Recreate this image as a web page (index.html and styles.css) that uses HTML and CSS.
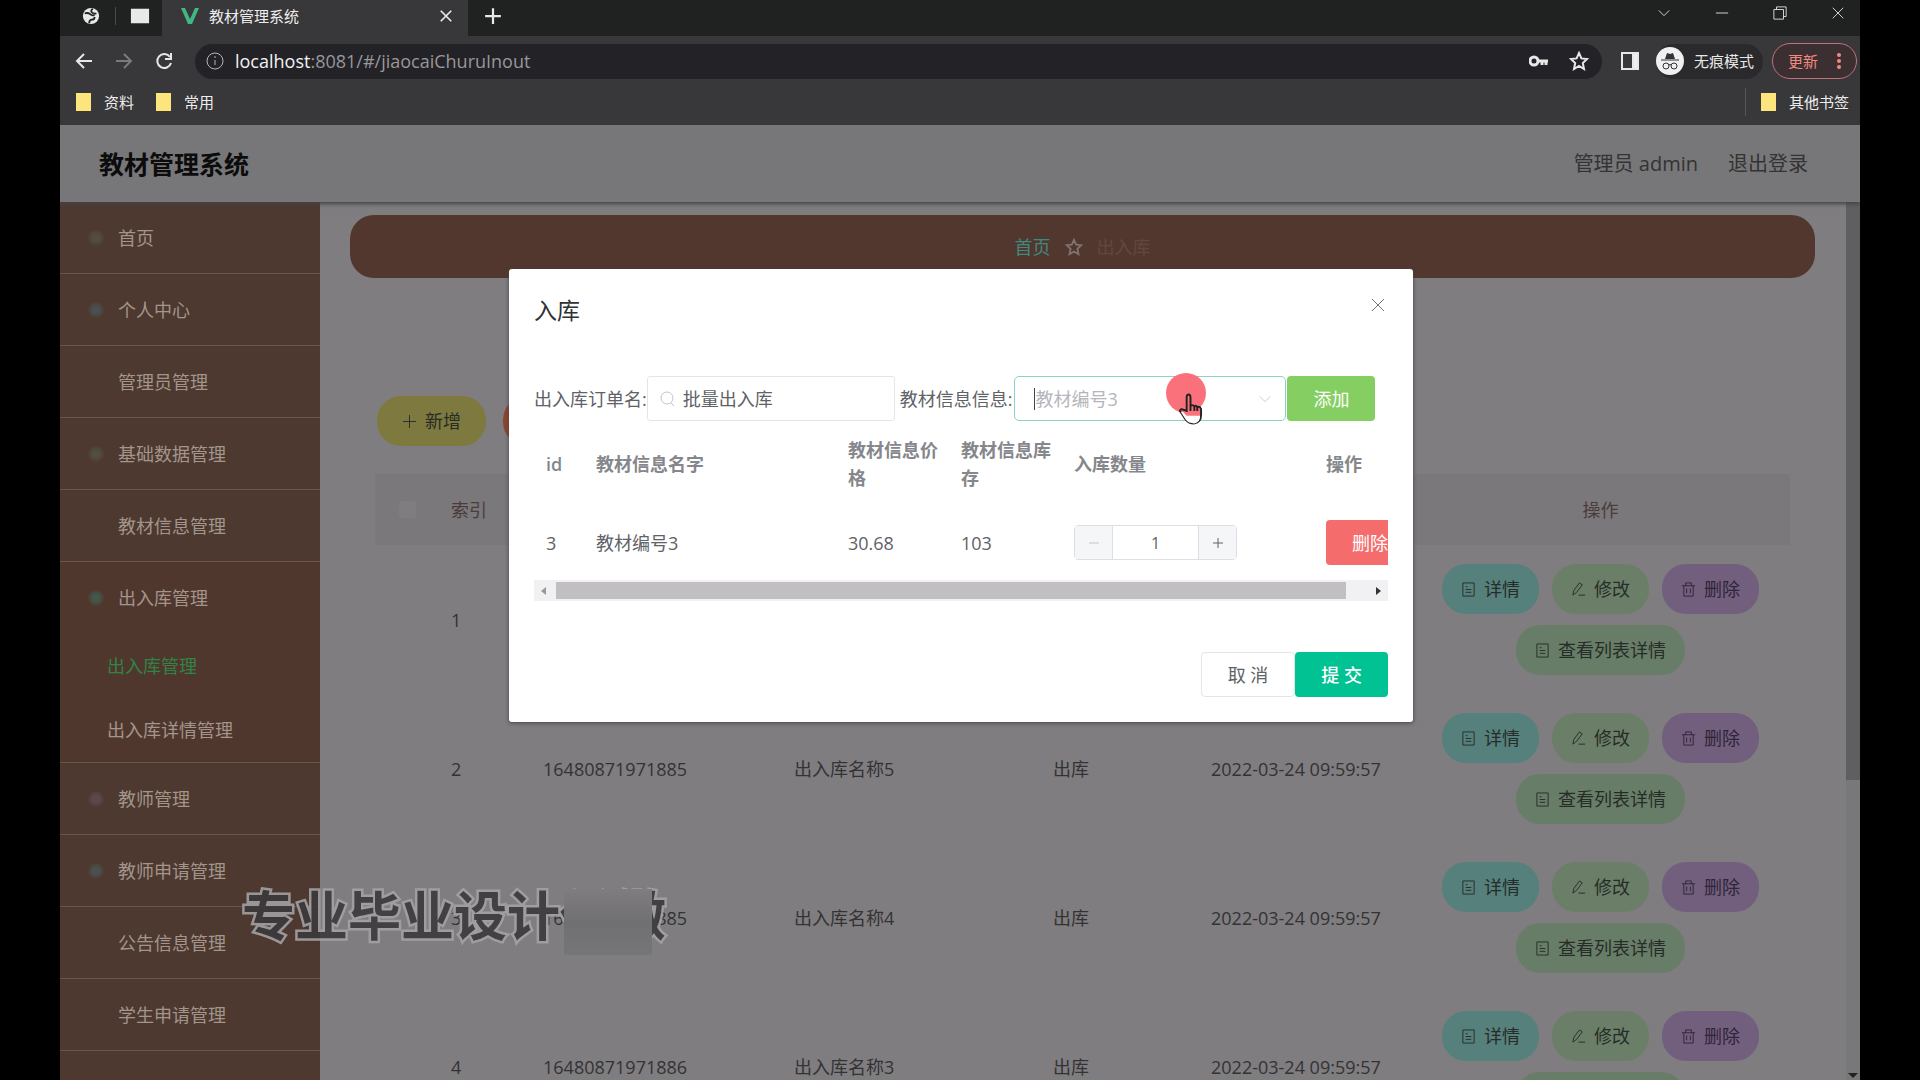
FILE: index.html
```html
<!DOCTYPE html>
<html lang="zh-CN">
  <head>
    <meta charset="UTF-8" />
    <title>教材管理系统</title>
    <link rel="stylesheet" href="styles.css">
  </head>
  <body>
    <svg class="sprite" aria-hidden="true">
      <symbol id="icon-doc" viewBox="0 0 16 16"><path d="M2 1h12v14H2zM5 5h2M5 8h6M5 11h6" /></symbol>
      <symbol id="icon-edit" viewBox="0 0 16 16"><path d="M2 14l1-5 6-8 3 2-6 8zM8 14h7" /></symbol>
      <symbol id="icon-trash" viewBox="0 0 16 16"><path d="M1 4h14M5 4V1h6v3M3 4v11h10V4M6 7v5M10 7v5" /></symbol>
      <symbol id="icon-star" viewBox="0 0 20 20"><path d="M10 2l2.400 5.400 5.600.600-4.200 4 1.200 6-5-3-5 3 1.200-6L2 8l5.600-.600z" /></symbol>
      <symbol id="icon-close" viewBox="0 0 16 16"><path d="M2 2l12 12M14 2L2 14" /></symbol>
      <symbol id="icon-down" viewBox="0 0 16 16"><path d="M2 5l6 6 6-6" /></symbol>
    </svg>

    <div class="window">
      <div class="tabs">
        <div class="tabs__pinned">
          <svg class="icon icon--globe" viewBox="0 0 20 20"><circle cx="10" cy="10" r="9" fill="#e8e8e8" /><path d="M3 7q4-1 6 1t5 1M12 2q-3 2-1 4t5 1M8 18q0-4 3-4t3-3" fill="none" stroke="#222423" stroke-width="2" /></svg>
        </div>
        <div class="tabs__pinned tabs__pinned--folder">
          <svg class="icon icon--page" viewBox="0 0 22 18"><path d="M1 1h20v16H1z" fill="#e8e8e8" /></svg>
        </div>
        <div class="tabs__active">
          <svg class="icon icon--vue" viewBox="0 0 20 18"><path d="M1 1h4l5 11 5-11h4l-7 16H8z" fill="#41b883" /></svg>
          <span class="tabs__title">教材管理系统</span>
          <button class="chrome-btn" aria-label="关闭标签页"><svg class="icon icon--small"><use href="#icon-close" /></svg></button>
        </div>
        <button class="chrome-btn tabs__new" aria-label="新标签页"><svg class="icon" viewBox="0 0 16 16"><path d="M8 1v14M1 8h14" /></svg></button>
        <div class="tabs__controls">
          <button class="chrome-btn" aria-label="搜索标签页"><svg class="icon icon--thin icon--small"><use href="#icon-down" /></svg></button>
          <button class="chrome-btn" aria-label="最小化"><svg class="icon icon--thin icon--small" viewBox="0 0 16 16"><path d="M1 8h14" /></svg></button>
          <button class="chrome-btn" aria-label="还原"><svg class="icon icon--thin icon--small" viewBox="0 0 16 16"><path d="M1 4h11v11H1zM4 4V1h11v11h-3" /></svg></button>
          <button class="chrome-btn" aria-label="关闭"><svg class="icon icon--thin icon--small"><use href="#icon-close" /></svg></button>
        </div>
      </div>

      <div class="toolbar">
        <div class="toolbar__nav">
          <button class="chrome-btn" aria-label="后退"><svg class="icon" viewBox="0 0 18 18"><path d="M17 9H2M9 2L2 9l7 7" /></svg></button>
          <button class="chrome-btn chrome-btn--off" aria-label="前进"><svg class="icon" viewBox="0 0 18 18"><path d="M1 9h15M9 2l7 7-7 7" /></svg></button>
          <button class="chrome-btn" aria-label="刷新"><svg class="icon" viewBox="0 0 18 18"><path d="M15 5a7 7 0 1 0 1 6M16 1v6h-6" /></svg></button>
        </div>
        <div class="address">
          <svg class="icon icon--info" viewBox="0 0 18 18"><circle cx="9" cy="9" r="8" /><path d="M9 8v5M9 4v2" /></svg>
          <a class="address__url" href="#/jiaocaiChuruInout"><b class="address__host">localhost</b>:8081/#/jiaocaiChuruInout</a>
          <svg class="icon icon--key" viewBox="0 0 20 12"><circle cx="5" cy="6" r="4" /><path d="M9 6h10M17 6v4M13 6v4" /></svg>
          <svg class="icon icon--star"><use href="#icon-star" /></svg>
        </div>
        <svg class="icon icon--panel" viewBox="0 0 18 18"><path d="M1 1h16v16H1z" /><path d="M12 1h5v16h-5z" fill="#eee" /></svg>
        <div class="incognito">
          <svg class="icon icon--incognito" viewBox="0 0 28 28"><circle cx="14" cy="14" r="14" fill="#f0f0f2" /><path d="M9 12l2-6 3 1 3-1 2 6z" fill="#333" /><path d="M5 13h18" stroke="#333" /><g fill="none" stroke="#333"><circle cx="10" cy="19" r="3" /><circle cx="18" cy="19" r="3" /><path d="M13 18q1-1 2 0" /></g></svg>
          <span>无痕模式</span>
        </div>
        <button class="update">更新
          <svg class="icon icon--dots" viewBox="0 0 4 18"><circle cx="2" cy="3" r="2" /><circle cx="2" cy="9" r="2" /><circle cx="2" cy="15" r="2" /></svg>
        </button>
      </div>

      <div class="bookmarks">
        <a class="bookmark" href="#"><i class="bookmark__folder"></i>资料</a>
        <a class="bookmark" href="#"><i class="bookmark__folder"></i>常用</a>
        <a class="bookmark bookmark--other" href="#"><i class="bookmark__folder"></i>其他书签</a>
      </div>

      <div class="app">
        <header class="header">
          <h1 class="header__title">教材管理系统</h1>
          <span class="header__user">管理员 admin</span>
          <a class="header__logout" href="#">退出登录</a>
        </header>

        <div class="layout">
          <nav class="menu">
            <a class="menu__item" href="#"><i class="menu__icon menu__icon--green"></i>首页</a>
            <a class="menu__item" href="#"><i class="menu__icon menu__icon--blue"></i>个人中心</a>
            <a class="menu__item" href="#"><i class="menu__icon"></i>管理员管理</a>
            <a class="menu__item" href="#"><i class="menu__icon menu__icon--green"></i>基础数据管理</a>
            <a class="menu__item" href="#"><i class="menu__icon"></i>教材信息管理</a>
            <div class="menu__group">
              <a class="menu__item menu__item--open" href="#"><i class="menu__icon menu__icon--teal"></i>出入库管理</a>
              <a class="menu__sub menu__sub--active" href="#">出入库管理</a>
              <a class="menu__sub" href="#">出入库详情管理</a>
            </div>
            <a class="menu__item" href="#"><i class="menu__icon menu__icon--violet"></i>教师管理</a>
            <a class="menu__item" href="#"><i class="menu__icon menu__icon--blue"></i>教师申请管理</a>
            <a class="menu__item" href="#"><i class="menu__icon"></i>公告信息管理</a>
            <a class="menu__item" href="#"><i class="menu__icon"></i>学生申请管理</a>
            <a class="menu__item" href="#"><i class="menu__icon"></i></a>
          </nav>

          <main class="main">
            <div class="breadcrumb">
              <a class="breadcrumb__home" href="#">首页</a>
              <svg class="icon icon--crumb"><use href="#icon-star" /></svg>
              <span>出入库</span>
            </div>

            <div class="panel">
              <div class="actions">
                <button class="pill pill--add"><svg class="icon icon--pill" viewBox="0 0 16 16"><path d="M8 1v14M1 8h14" /></svg>新增</button>
                <button class="pill pill--remove"><svg class="icon icon--pill"><use href="#icon-trash" /></svg>删除</button>
              </div>

              <table class="list">
                <colgroup>
                  <col class="list__check"><col class="list__index"><col class="list__order"><col class="list__name"><col class="list__type"><col class="list__date"><col class="list__ops">
                </colgroup>
                <thead>
                  <tr>
                    <th><input class="check" type="checkbox" aria-label="全选"></th>
                    <th>索引</th>
                    <th></th>
                    <th></th>
                    <th></th>
                    <th></th>
                    <th>操作</th>
                  </tr>
                </thead>
                <tbody>
                  <tr>
                    <td><input class="check" type="checkbox" aria-label="选择 1"></td>
                    <td>1</td>
                    <td></td>
                    <td></td>
                    <td></td>
                    <td></td>
                    <td>
                      <div class="ops">
                        <button class="pill pill--info"><svg class="icon icon--pill"><use href="#icon-doc" /></svg>详情</button>
                        <button class="pill pill--edit"><svg class="icon icon--pill"><use href="#icon-edit" /></svg>修改</button>
                        <button class="pill pill--delete"><svg class="icon icon--pill"><use href="#icon-trash" /></svg>删除</button>
                        <button class="pill pill--detail"><svg class="icon icon--pill"><use href="#icon-doc" /></svg>查看列表详情</button>
                      </div>
                    </td>
                  </tr>
                  <tr>
                    <td><input class="check" type="checkbox" aria-label="选择 2"></td>
                    <td>2</td>
                    <td>16480871971885</td>
                    <td>出入库名称5</td>
                    <td>出库</td>
                    <td>2022-03-24 09:59:57</td>
                    <td>
                      <div class="ops">
                        <button class="pill pill--info"><svg class="icon icon--pill"><use href="#icon-doc" /></svg>详情</button>
                        <button class="pill pill--edit"><svg class="icon icon--pill"><use href="#icon-edit" /></svg>修改</button>
                        <button class="pill pill--delete"><svg class="icon icon--pill"><use href="#icon-trash" /></svg>删除</button>
                        <button class="pill pill--detail"><svg class="icon icon--pill"><use href="#icon-doc" /></svg>查看列表详情</button>
                      </div>
                    </td>
                  </tr>
                  <tr>
                    <td><input class="check" type="checkbox" aria-label="选择 3"></td>
                    <td>3</td>
                    <td>16480871971885</td>
                    <td>出入库名称4</td>
                    <td>出库</td>
                    <td>2022-03-24 09:59:57</td>
                    <td>
                      <div class="ops">
                        <button class="pill pill--info"><svg class="icon icon--pill"><use href="#icon-doc" /></svg>详情</button>
                        <button class="pill pill--edit"><svg class="icon icon--pill"><use href="#icon-edit" /></svg>修改</button>
                        <button class="pill pill--delete"><svg class="icon icon--pill"><use href="#icon-trash" /></svg>删除</button>
                        <button class="pill pill--detail"><svg class="icon icon--pill"><use href="#icon-doc" /></svg>查看列表详情</button>
                      </div>
                    </td>
                  </tr>
                  <tr>
                    <td><input class="check" type="checkbox" aria-label="选择 4"></td>
                    <td>4</td>
                    <td>16480871971886</td>
                    <td>出入库名称3</td>
                    <td>出库</td>
                    <td>2022-03-24 09:59:57</td>
                    <td>
                      <div class="ops">
                        <button class="pill pill--info"><svg class="icon icon--pill"><use href="#icon-doc" /></svg>详情</button>
                        <button class="pill pill--edit"><svg class="icon icon--pill"><use href="#icon-edit" /></svg>修改</button>
                        <button class="pill pill--delete"><svg class="icon icon--pill"><use href="#icon-trash" /></svg>删除</button>
                        <button class="pill pill--detail"><svg class="icon icon--pill"><use href="#icon-doc" /></svg>查看列表详情</button>
                      </div>
                    </td>
                  </tr>
                </tbody>
              </table>
            </div>
          </main>

          <div class="scroll">
            <div class="scroll__thumb"></div>
            <div class="scroll__arrow"></div>
          </div>
        </div>
      </div>
    </div>

    <div class="overlay">
      <div class="dialog" role="dialog" aria-labelledby="dialog-title">
        <div class="dialog__header">
          <h2 class="dialog__title" id="dialog-title">入库</h2>
          <button class="dialog__close" aria-label="关闭"><svg class="icon icon--thin"><use href="#icon-close" /></svg></button>
        </div>

        <div class="form">
          <label for="order">出入库订单名:</label>
          <div class="field">
            <svg class="icon icon--search" viewBox="0 0 16 16"><circle cx="8" cy="7" r="6" /><path d="M12 12l3 3" /></svg>
            <input class="field__input" id="order" type="text" value="批量出入库">
          </div>
          <label class="form__label" for="book">教材信息信息:</label>
          <div class="picker">
            <select class="picker__select" id="book">
              <option>教材编号3</option>
            </select>
            <i class="picker__caret"></i>
            <svg class="icon icon--arrow"><use href="#icon-down" /></svg>
            <div class="pointer">
              <svg class="pointer__hand" viewBox="0 0 26 32"><path d="M9 18V4q0-3 2-3t2 3v9q1-2 4 0 2-1 3 1 3-1 4 2v6q0 8-7 9-6 0-9-4l-6-9q1-3 4-1z" /><path class="pointer__palm" d="M3 19q2-1 4 2l2 2h14q0 7-6 8-6 0-9-4z" /><path d="M13 12v6M17 13v5M20 14v4" /></svg>
            </div>
          </div>
          <button class="btn btn--success">添加</button>
        </div>

        <div class="books">
          <table class="books__table">
            <colgroup>
              <col class="books__id"><col class="books__name"><col class="books__price"><col class="books__stock"><col class="books__count"><col class="books__ops">
            </colgroup>
            <thead>
              <tr>
                <th>id</th>
                <th>教材信息名字</th>
                <th>教材信息价格</th>
                <th>教材信息库存</th>
                <th>入库数量</th>
                <th>操作</th>
              </tr>
            </thead>
            <tbody>
              <tr>
                <td>3</td>
                <td>教材编号3</td>
                <td>30.68</td>
                <td>103</td>
                <td>
                  <div class="stepper">
                    <button class="stepper__btn stepper__btn--off" aria-label="减少"><svg class="icon icon--step" viewBox="0 0 12 12"><path d="M1 6h10" /></svg></button>
                    <input class="stepper__input" type="text" value="1" aria-label="入库数量">
                    <button class="stepper__btn" aria-label="增加"><svg class="icon icon--step" viewBox="0 0 12 12"><path d="M1 6h10M6 1v10" /></svg></button>
                  </div>
                </td>
                <td><button class="btn btn--danger">删除</button></td>
              </tr>
            </tbody>
          </table>
        </div>
        <div class="hscroll">
          <i class="hscroll__left"></i>
          <div class="hscroll__thumb"></div>
          <i class="hscroll__right"></i>
        </div>

        <div class="dialog__footer">
          <button class="btn btn--plain">取 消</button>
          <button class="btn btn--primary">提 交</button>
        </div>
      </div>
    </div>

    <div class="watermark"><span class="watermark__text">专业毕业设计代做</span><i class="watermark__cover"></i></div>
  </body>
</html>
```

FILE: styles.css
```css
* {
  box-sizing: border-box;
}

body {
  margin: 0;
  padding: 0 60px;
  height: 100vh;
  overflow: hidden;
  background-color: black;
  color: #333;
  font-family: "Open Sans", "Noto Sans CJK SC", sans-serif;
  font-size: 18px;
  line-height: 28px;
}

button,
input,
select {
  margin: 0;
  padding: 0;
  border: none;
  background: none;
  color: inherit;
  font: inherit;
}

a {
  color: inherit;
  text-decoration: none;
}

.sprite {
  display: none;
}

.icon {
  display: block;
  flex: none;
  width: 18px;
  height: 18px;
  fill: none;
  stroke: currentColor;
  stroke-width: 2;
}

.icon--small {
  width: 14px;
  height: 14px;
}

.icon--thin {
  stroke-width: 1;
}

.icon--page,
.icon--vue,
.icon--globe {
  width: 20px;
  stroke: none;
}

.icon--key {
  width: 20px;
  height: 12px;
  stroke-width: 3;
}

.icon--info,
.icon--incognito {
  stroke-width: 1;
}

.icon--incognito {
  width: 28px;
  height: 28px;
  stroke: none;
}

.icon--dots {
  width: 4px;
  fill: currentColor;
  stroke: none;
}

.icon--pill {
  width: 15px;
  height: 15px;
  stroke-width: 1;
}

/* browser chrome */

.window {
  display: flex;
  flex-direction: column;
  height: 100%;
  overflow: hidden;
  background-color: #38373a;
}

.chrome-btn {
  display: flex;
  color: #e8e8e8;
}

.chrome-btn--off {
  color: #7b7a7d;
}

.tabs {
  display: flex;
  flex: none;
  align-items: center;
  height: 36px;
  padding-bottom: 4px;
  background-color: #1f2221;
}

.tabs__pinned {
  padding: 0 14px 0 21px;
  border-right: 1px solid #4a4b4b;
}

.tabs__pinned--folder {
  padding: 0 12px 0 14px;
  border: none;
}

.tabs__active {
  display: flex;
  align-items: center;
  gap: 9px;
  width: 306px;
  height: 36px;
  margin-bottom: -4px;
  padding: 0 15px 4px 18px;
  background-color: #38373a;
  color: #eee;
  font-size: 15px;
}

.tabs__title {
  flex: 1;
}

.tabs__new {
  margin-left: 16px;
}

.tabs__controls {
  display: flex;
  gap: 44px;
  margin-left: auto;
  padding: 0 15px 6px 0;
}

.toolbar {
  display: flex;
  flex: none;
  align-items: center;
  height: 50px;
  color: #e8e8e8;
}

.toolbar__nav {
  display: flex;
  gap: 22px;
  width: 135px;
  padding-left: 15px;
}

.address {
  display: flex;
  flex: 1;
  align-items: center;
  height: 35px;
  padding: 0 13px 0 11px;
  border-radius: 18px;
  background-color: #232226;
}

.address__url {
  flex: 1;
  margin-left: 11px;
  color: #98979a;
}

.address__host {
  color: #f2f2f2;
  font-weight: 400;
}

.icon--info {
  color: #b5b5b7;
}

.icon--star {
  width: 20px;
  height: 20px;
  margin-left: 20px;
}

.icon--panel {
  margin: 0 17px 0 19px;
}

.incognito {
  display: flex;
  align-items: center;
  gap: 10px;
  height: 35px;
  padding-right: 9px;
  border-radius: 18px;
  background-color: #2a292c;
  font-size: 15px;
}

.update {
  display: flex;
  align-items: center;
  gap: 19px;
  height: 36px;
  margin: 0 3px 0 9px;
  padding: 0 15px;
  border: 1px solid #c2727a;
  border-radius: 18px;
  background-color: #3b2f31;
  color: #f08a80;
  font-size: 15px;
}

.bookmarks {
  display: flex;
  flex: none;
  align-items: center;
  gap: 22px;
  height: 39px;
  padding: 0 11px 8px 16px;
  color: #eee;
  font-size: 15px;
}

.bookmark {
  display: flex;
  align-items: center;
  gap: 13px;
}

.bookmark--other {
  margin-left: auto;
  padding-left: 15px;
  border-left: 1px solid #555458;
}

.bookmark__folder {
  width: 15px;
  height: 18px;
  background-color: #fbe57c;
}

/* admin page */

.app {
  display: flex;
  flex: 1;
  flex-direction: column;
  min-height: 0;
  background-color: #7f7d80;
}

.header {
  display: flex;
  z-index: 1;
  flex: none;
  align-items: center;
  height: 77px;
  padding: 0 52px 0 39px;
  background-color: #777779;
  box-shadow: 0 2px 4px #444446;
  font-size: 20px;
}

.header__title {
  flex: 1;
  margin: 0;
  color: #0c0c0c;
  font-size: 25px;
  font-weight: 700;
}

.header__logout {
  margin-left: 30px;
}

.layout {
  display: flex;
  flex: 1;
  min-height: 0;
}

.menu {
  flex: none;
  width: 260px;
  background-color: #4d392f;
  color: #a3958c;
}

.menu__item {
  display: flex;
  align-items: center;
  gap: 14px;
  height: 72px;
  padding-left: 28px;
  border-bottom: 1px solid #6e5443;
}

.menu__item--open {
  border: none;
}

.menu__icon {
  width: 16px;
  height: 16px;
  border-radius: 8px;
}

.menu__icon--green {
  background-image: radial-gradient(#534d40 30%, #4d392f 80%);
}

.menu__icon--blue {
  background-image: radial-gradient(#4a4f50 30%, #4d392f 80%);
}

.menu__icon--teal {
  background-image: radial-gradient(#43564a 30%, #50372e 80%);
}

.menu__icon--violet {
  background-image: radial-gradient(#594850 30%, #4d392f 80%);
}

.menu__group {
  border-bottom: 1px solid #6e5443;
  background-color: #50372e;
}

.menu__sub {
  display: flex;
  align-items: center;
  height: 64px;
  padding-left: 47px;
}

.menu__sub--active {
  color: #2f8446;
}

.main {
  flex: 1;
  min-width: 0;
  padding: 13px 31px 0 30px;
}

.breadcrumb {
  display: flex;
  align-items: center;
  justify-content: center;
  gap: 14px;
  height: 63px;
  border-radius: 24px;
  background-color: #52372f;
  color: #604841;
}

.breadcrumb__home {
  color: #3f8a80;
}

.icon--crumb {
  color: #817370;
}

.panel {
  padding: 118px 25px 0;
}

.actions {
  display: flex;
  gap: 17px;
  margin-bottom: 28px;
  padding-left: 2px;
}

.pill {
  display: flex;
  align-items: center;
  justify-content: center;
  gap: 8px;
  height: 50px;
  padding: 0 19px;
  border-radius: 24px;
  color: #262c28;
}

.pill--add {
  padding: 0 25px;
  background-color: #7e7a3f;
}

.pill--remove {
  background-color: #8d4430;
}

.pill--info {
  background-color: #56807c;
}

.pill--edit {
  background-color: #6b7f68;
}

.pill--delete {
  background-color: #725f7e;
  color: #2f2438;
}

.pill--detail {
  background-color: #687d67;
}

.list {
  width: 100%;
  border-collapse: collapse;
  table-layout: fixed;
}

.list th {
  height: 71px;
  padding: 0 12px;
  background-color: #7a787b;
  color: #4b3c3c;
  font-weight: 400;
  text-align: left;
}

.list th:last-child {
  text-align: center;
}

.list td {
  height: 149px;
  padding: 0 12px;
}

.list__check {
  width: 64px;
}

.list__index {
  width: 92px;
}

.list__order {
  width: 251px;
}

.list__name {
  width: 259px;
}

.list__type {
  width: 158px;
}

.list__date {
  width: 212px;
}

.check {
  display: block;
  width: 17px;
  height: 17px;
  margin: 0 auto;
  border-radius: 3px;
  background-color: #7f7d80;
  appearance: none;
}

.ops {
  display: flex;
  flex-wrap: wrap;
  justify-content: center;
  gap: 11px 13px;
}

.scroll {
  display: flex;
  flex: none;
  flex-direction: column;
  align-items: center;
  justify-content: space-between;
  width: 14px;
  padding: 0 0 2px;
  background-color: #787779;
}

.scroll__thumb {
  width: 100%;
  height: 66%;
  background-color: #5f5e60;
}

.scroll__arrow {
  border: solid 5px transparent;
  border-top-color: #222;
  border-bottom: none;
}

/* dialog */

.overlay {
  position: absolute;
  z-index: 2;
  top: 0;
  left: 0;
  width: 100%;
  padding: 269px 0 0 2px;
}

.dialog {
  width: 904px;
  max-width: 90%;
  margin: 0 auto;
  padding: 25px;
  border-radius: 3px;
  background-color: white;
  box-shadow: 0 1px 4px #444;
  color: #606266;
}

.dialog__header {
  display: flex;
  align-items: flex-start;
  justify-content: space-between;
  height: 82px;
}

.dialog__title {
  margin: 0;
  padding-top: 2px;
  color: #303133;
  font-size: 23px;
  font-weight: 400;
}

.dialog__close {
  display: flex;
  padding: 3px 2px 0 0;
  color: #777;
}

.dialog__close .icon {
  width: 16px;
  height: 16px;
}

.form {
  display: flex;
  align-items: center;
}

.form__label {
  margin: 0 2px 0 5px;
}

.field {
  display: flex;
  align-items: center;
  gap: 8px;
  width: 248px;
  height: 45px;
  padding: 0 11px;
  border: 1px solid #e4e5ea;
  border-radius: 3px;
}

.field__input {
  flex: 1;
  min-width: 0;
  outline: none;
}

.icon--search {
  width: 16px;
  height: 16px;
  color: #c0c4cc;
  stroke-width: 1;
}

.picker {
  position: relative;
  flex: 1;
  max-width: 272px;
  height: 45px;
}

.picker__select {
  width: 100%;
  height: 100%;
  padding-left: 20px;
  border: 1px solid #8ad3c6;
  border-radius: 5px;
  color: #b4b6bb;
  appearance: none;
}

.picker__caret {
  position: absolute;
  top: 12px;
  left: 20px;
  width: 1px;
  height: 22px;
  background-color: #444;
}

.icon--arrow {
  position: absolute;
  top: 16px;
  right: 14px;
  width: 14px;
  height: 14px;
  color: #c0c4cc;
  stroke-width: 1;
}

.pointer {
  position: absolute;
  top: -3px;
  left: 152px;
  width: 40px;
  height: 40px;
  border-radius: 20px;
  background-color: #fb717b;
}

.pointer__hand {
  position: absolute;
  top: 20px;
  left: 12px;
  width: 25px;
  height: 32px;
  fill: #fb717b;
  stroke: #222;
  stroke-width: 2;
}

.pointer__palm {
  fill: white;
  stroke: none;
}

.btn {
  flex: none;
  height: 45px;
  padding: 0 26px;
  border-radius: 4px;
  color: white;
}

.btn--success {
  margin-left: 1px;
  background-color: #85ce61;
}

.btn--danger {
  background-color: #f56c6c;
}

.btn--plain {
  border: 1px solid #e4e5ea;
  color: #606266;
}

.btn--primary {
  background-color: #00c292;
  font-weight: 500;
}

.books {
  overflow: hidden;
}

.books__table {
  width: 892px;
  border-collapse: collapse;
  table-layout: fixed;
}

.books__table th {
  height: 86px;
  padding: 0 8px 0 12px;
  color: #85878c;
  font-weight: 600;
  text-align: left;
}

.books__table td {
  height: 71px;
  padding: 0 12px;
}

.books__id {
  width: 50px;
}

.books__name {
  width: 252px;
}

.books__price {
  width: 113px;
}

.books__stock {
  width: 113px;
}

.books__count {
  width: 252px;
}

.stepper {
  display: flex;
  width: 163px;
  height: 35px;
  border: 1px solid #dcdfe6;
  border-radius: 4px;
}

.stepper__btn {
  display: flex;
  align-items: center;
  justify-content: center;
  width: 37px;
  background-color: #f5f6f8;
}

.stepper__btn--off {
  color: #c0c4cc;
}

.stepper__input {
  flex: 1;
  min-width: 0;
  border: solid #dcdfe6;
  border-width: 0 1px;
  font-size: 16px;
  text-align: center;
}

.icon--step {
  width: 12px;
  height: 12px;
  stroke-width: 1;
}

.hscroll {
  display: flex;
  align-items: center;
  gap: 10px;
  height: 21px;
  margin-top: 2px;
  padding: 0 7px;
  background-color: #f1f0f2;
}

.hscroll__thumb {
  flex: 1;
  height: 17px;
  margin-right: 20px;
  background-color: #c1bfc2;
}

.hscroll__left {
  border: solid 4px transparent;
  border-right: solid 5px #999;
  border-left: none;
}

.hscroll__right {
  border: solid 4px transparent;
  border-left: solid 5px #333;
  border-right: none;
}

.dialog__footer {
  display: flex;
  justify-content: flex-end;
  padding-top: 51px;
}

/* watermark over the page */

.watermark {
  position: absolute;
  z-index: 3;
  top: 880px;
  left: 242px;
  font-size: 53px;
  font-weight: 700;
  line-height: 72px;
}

.watermark__text {
  color: #3c3a3d;
  opacity: 0.9;
  paint-order: stroke;
  -webkit-text-stroke: 5px #a3a1a3;
}

.watermark__cover {
  position: absolute;
  top: 9px;
  right: 14px;
  width: 88px;
  height: 66px;
  background-image: linear-gradient(#7f7d80, #706f71 50%, #767577);
}
```
